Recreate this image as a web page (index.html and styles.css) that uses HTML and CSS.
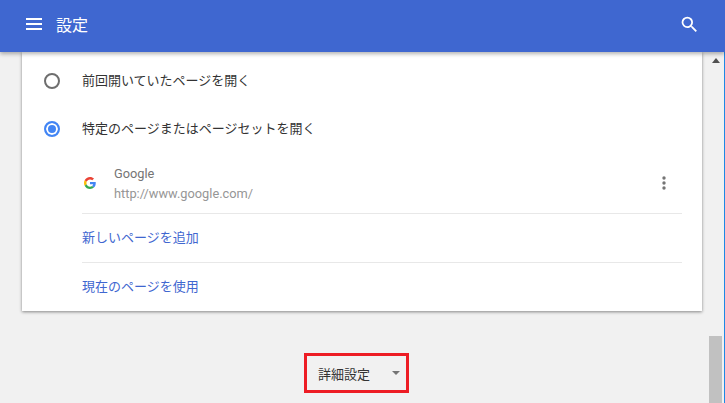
FILE: index.html
```html
<!DOCTYPE html>
<html lang="ja">

<head>
    <meta charset="UTF-8">
    <title>設定</title>
    <link rel="stylesheet" href="styles.css">
</head>

<body>
    <header class="top-bar">
        <svg class="menu-icon" width="16" height="12" viewBox="0 0 16 12">
            <path d="M0 0h16v2H0zM0 5h16v2H0zM0 10h16v2H0z" fill="#fff" />
        </svg>
        <div class="page-title">設定</div>
        <svg class="search-icon" width="21" height="21" viewBox="0 0 24 24">
            <path fill="#fff"
                d="M15.5 14h-.79l-.28-.27A6.47 6.47 0 0 0 16 9.5 6.5 6.5 0 1 0 9.5 16c1.61 0 3.09-.59 4.23-1.57l.27.28v.79l5 4.99L20.49 19l-4.99-5zm-6 0C7.01 14 5 11.99 5 9.5S7.01 5 9.500 5 14 7.010 14 9.500 11.990 14 9.500 14z" />
        </svg>
    </header>

    <div class="main">
        <div class="content">
            <div class="card">
                <div class="radio-row">
                    <span class="radio"></span>
                    <span class="radio-label">前回開いていたページを開く</span>
                </div>
                <div class="radio-row">
                    <span class="radio checked"></span>
                    <span class="radio-label">特定のページまたはページセットを開く</span>
                </div>
                <div class="page-row">
                    <svg class="favicon" width="12" height="12" viewBox="0 0 48 48">
                        <path fill="#ea4335" d="M24 9.500c3.500 0 6.700 1.200 9.200 3.600l6.900-6.900C35.900 2.400 30.500 0 24 0 14.600 0 6.500 5.400 2.600 13.200l8 6.200C12.500 13.700 17.800 9.500 24 9.500z" />
                        <path fill="#4285f4" d="M47 24.500c0-1.600-.1-3.100-.4-4.500H24v9h12.900c-.6 3-2.200 5.500-4.800 7.200l7.700 6C44.300 38 47 31.800 47 24.500z" />
                        <path fill="#fbbc05" d="M10.600 28.600c-.5-1.400-.8-3-.8-4.600s.3-3.200.8-4.600l-8-6.200C.9 16.500 0 20.100 0 24s.9 7.500 2.600 10.800l8-6.200z" />
                        <path fill="#34a853" d="M24 48c6.500 0 11.900-2.100 15.800-5.800l-7.700-6c-2.100 1.400-4.900 2.300-8.100 2.300-6.200 0-11.500-4.200-13.400-9.900l-8 6.200C6.500 42.600 14.600 48 24 48z" />
                    </svg>
                    <div class="page-info">
                        <div class="page-name">Google</div>
                        <div class="page-url">http://www.google.com/</div>
                    </div>
                    <svg class="more-icon" width="4" height="14" viewBox="0 0 4 14">
                        <circle cx="2" cy="2" r="1.700" />
                        <circle cx="2" cy="7" r="1.700" />
                        <circle cx="2" cy="12" r="1.700" />
                    </svg>
                </div>
                <div class="link-row">新しいページを追加</div>
                <div class="link-row">現在のページを使用</div>
            </div>
            <div class="advanced">
                <span>詳細設定</span>
                <span class="arrow-down"></span>
            </div>
        </div>
        <div class="scrollbar">
            <span class="arrow-up"></span>
            <div class="thumb"></div>
        </div>
    </div>
</body>

</html>
```

FILE: styles.css
```css
html,
body {
    height: 100%;
}

body {
    margin: 0;
    display: flex;
    flex-direction: column;
    overflow: hidden;
    background-color: #f1f1f1;
    color: #333;
    font-family: "Liberation Sans", "Noto Sans CJK JP", sans-serif;
    font-size: 13px;
}

/* Top bar */
.top-bar {
    position: relative;
    z-index: 1;
    flex: none;
    height: 52px;
    box-sizing: border-box;
    display: flex;
    align-items: center;
    padding-left: 26px;
    padding-right: 25px;
    padding-bottom: 4px;
    background-color: #3f67d0;
    box-shadow: 0 2px 4px rgba(0, 0, 0, 0.3);
}

.page-title {
    margin-left: 14px;
    color: #fff;
    font-size: 16px;
}

.search-icon {
    margin-left: auto;
}

/* Main area */
.main {
    flex: 1;
    min-height: 0;
    display: flex;
    border-right: 1px solid #1e88e5;
}

.content {
    width: 709px;
    overflow: hidden;
}

.card {
    width: 680px;
    margin-left: 22px;
    padding-top: 5px;
    background-color: #fff;
    box-shadow: 0 1px 3px rgba(0, 0, 0, 0.45);
}

.radio-row {
    height: 48px;
    display: flex;
    align-items: center;
    padding-left: 22px;
}

.radio {
    width: 12px;
    height: 12px;
    margin-right: 22px;
    border: 2px solid #6e6e6e;
    border-radius: 50%;
}

.radio.checked {
    border-color: #4285f4;
    background-color: #4285f4;
    box-shadow: inset 0 0 0 2px #fff;
}

.radio-label {
    padding-bottom: 3px;
}

.page-row {
    height: 60px;
    display: flex;
    align-items: center;
    margin: 0 20px 0 60px;
    border-bottom: 1px solid #e8e8e8;
}

.favicon {
    margin-left: 2px;
    margin-right: 18px;
}

.page-info {
    padding-top: 1px;
    font-family: Roboto, sans-serif;
    font-size: 12.8px;
    line-height: 20px;
}

.page-name {
    color: #757575;
}

.page-url {
    color: #969696;
}

.more-icon {
    margin-left: auto;
    margin-right: 16px;
    fill: #757575;
}

.link-row {
    height: 48px;
    line-height: 48px;
    margin: 0 20px 0 60px;
    color: #3f67d0;
}

.link-row + .link-row {
    border-top: 1px solid #e8e8e8;
}

/* Advanced button, outlined in red */
.advanced {
    width: 105px;
    height: 40px;
    box-sizing: border-box;
    display: flex;
    align-items: center;
    margin-top: 42px;
    margin-left: 304px;
    padding-left: 11px;
    border: 3px solid #ed1c24;
}

.arrow-down {
    margin-left: 22px;
    border-top: 4px solid #757575;
    border-left: 4px solid transparent;
    border-right: 4px solid transparent;
}

/* Scrollbar */
.scrollbar {
    width: 13px;
    margin-right: 2px;
    display: flex;
    flex-direction: column;
    align-items: center;
}

.arrow-up {
    margin-top: 6px;
    border-bottom: 5px solid #505050;
    border-left: 4px solid transparent;
    border-right: 4px solid transparent;
}

.thumb {
    width: 13px;
    height: 67px;
    margin-top: auto;
    background-color: #c1c1c1;
}
```
